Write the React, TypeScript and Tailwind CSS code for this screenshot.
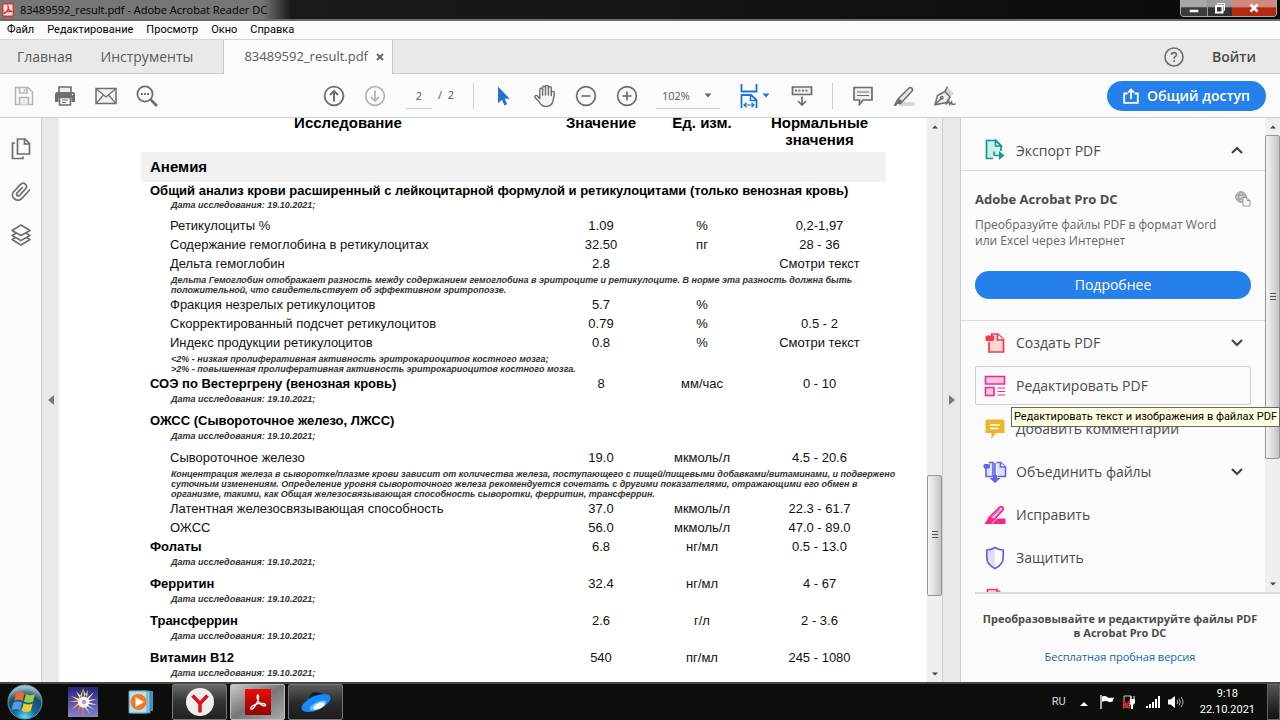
import React from "react";

type IconProps = { className?: string };

/* ---------- toolbar icons ---------- */

const SaveIcon = () => (
  <svg viewBox="0 0 20 20" className="h-5 w-5" fill="none" stroke="#b5b5b5" strokeWidth="1.6">
    <path d="M1.500 1.500h12.500l4.500 4.500v12.500h-17z" />
    <path d="M5.500 1.500v5.500h7.500V1.500" />
    <path d="M10.500 3v2.500" />
    <path d="M5.500 18.500v-7h9v7" fill="#eee" />
  </svg>
);
const PrintIcon = () => (
  <svg viewBox="0 0 22 20" className="h-5 w-[22px]">
    <path d="M5 6V1h12v5" fill="#eee" stroke="#6e6e6e" strokeWidth="1.6" />
    <path d="M1 7.500 2.500 6h17L21 7.500V16h-3.500v-4.500h-13V16H1z" fill="#6e6e6e" />
    <path d="M5.500 11.500h11v7.500h-11z" fill="#fafafa" stroke="#6e6e6e" strokeWidth="1.6" />
    <path d="M8 14h6M8 16.500h4" stroke="#6e6e6e" />
    <circle cx="18.500" cy="8.500" r=".8" fill="#fff" />
  </svg>
);
const MailIcon = () => (
  <svg viewBox="0 0 22 18" className="h-[18px] w-[22px]" fill="none" stroke="#6e6e6e" strokeWidth="1.5">
    <path d="M1 1.500h20v15H1z" fill="#f2f2f2" />
    <path d="m1.500 2 9.500 8 9.500-8M1.500 16l7-8M20.500 16l-7-8" strokeWidth="1.200" />
  </svg>
);
const FindIcon = () => (
  <svg viewBox="0 0 22 22" className="h-[22px] w-[22px]" fill="none" stroke="#6e6e6e">
    <circle cx="9" cy="9" r="7.600" strokeWidth="1.800" />
    <path d="m14.500 14.500 6.500 6.500" strokeWidth="2.600" />
    <path d="M5 9h1.800M8.100 9h1.800M11.200 9H13" strokeWidth="1.800" />
  </svg>
);
const ArrowCircle = ({ down }: { down?: boolean }) => (
  <svg viewBox="0 0 22 22" className="h-[22px] w-[22px]" fill="none" stroke={down ? "#b5b5b5" : "#6e6e6e"} strokeWidth="1.800">
    <circle cx="11" cy="11" r="9.400" />
    {down ? <path d="M11 5.500v10.500M7 12l4 4 4-4" /> : <path d="M11 16.500V6M7 10l4-4 4 4" strokeWidth="2" />}
  </svg>
);
const PointerIcon = () => (
  <svg viewBox="0 0 14 20" className="h-5 w-3.5">
    <path d="M1 .5v16.800l3.900-3.500 2.600 5.700 2.700-1.200-2.500-5.500h5z" fill="#1d74d0" />
  </svg>
);
const HandIcon = () => (
  <svg viewBox="0 0 22 24" className="h-6 w-[22px]" fill="#f4f4f4" stroke="#6e6e6e" strokeWidth="1.400" strokeLinejoin="round" strokeLinecap="round">
    <path d="M5.800 13V5.500c0-1.900 2.800-1.900 2.800 0V3.600c0-1.900 2.900-1.900 2.900 0v-.8c0-1.900 2.900-1.900 2.900 0v1.400c0-1.900 2.900-1.900 2.900 0V8.500c.6-1.800 3.200-1.300 3 .6-.1 2.500-.6 5-1.200 7.400-.9 3.800-3 6-6.800 6-3.800 0-5.700-1.600-7.200-4.800L1 13.500c-.8-1.900 1.400-2.900 2.600-1.300l2.200 2.600z" />
    <path d="M8.600 5.500V11M11.500 3.800V11M14.400 4V11M17.300 8v3.500" />
  </svg>
);
const ZoomCircle = ({ plus }: { plus?: boolean }) => (
  <svg viewBox="0 0 22 22" className="h-[22px] w-[22px]" fill="none" stroke="#6e6e6e" strokeWidth="1.700">
    <circle cx="11" cy="11" r="9.400" />
    <path d="M6.500 11h9" />
    {plus && <path d="M11 6.500v9" />}
  </svg>
);
const FitIcon = () => (
  <svg viewBox="0 0 18 24" className="h-6 w-[18px] shrink-0" fill="none" stroke="#1d74d0" strokeWidth="1.800">
    <path d="M1.500 0v7.500h15V0" />
    <path d="M1.500 24V11h9.500l5.500 5v8" />
    <path d="M10.500 11v5.500h6" strokeWidth="1.500" />
    <path d="M4 21h10M6.500 18.800 4 21l2.500 2.200M11.500 18.800 14 21l-2.500 2.200" strokeWidth="1.200" />
  </svg>
);
const Caret = ({ className }: IconProps) => (
  <svg viewBox="0 0 8 5" className={className}>
    <path d="M.5.500h7L4 4.500z" fill="currentColor" />
  </svg>
);
const KeyboardIcon = () => (
  <svg viewBox="0 0 22 22" className="h-[22px] w-[22px]" fill="none" stroke="#6e6e6e" strokeWidth="1.700">
    <path d="M1.500 2h19v7.500h-19z" fill="#eee" />
    <path d="M4 5.700h14" strokeDasharray="2 1.500" />
    <path d="M11 11.500V20M7 16l4 4 4-4" />
  </svg>
);
const CommentIcon = () => (
  <svg viewBox="0 0 20 20" className="h-5 w-5" fill="#eee" stroke="#6e6e6e" strokeWidth="1.700">
    <path d="M1 1.500h18v12.500h-9l-3.500 4.500V14H1z" />
    <path d="M4 6h12M4 9.500h12" strokeWidth="1.200" />
  </svg>
);
const MarkerIcon = () => (
  <svg viewBox="0 0 22 20" className="h-5 w-[22px]">
    <path d="M9 16h12.500v4H5z" fill="#d6d6d6" />
    <path d="m5.500 12.500 10-10c2-2.200 5.300.3 3.400 2.800l-9 9.700-3.400.3z" fill="#e6e6e6" stroke="#6e6e6e" strokeWidth="1.500" />
    <path d="M5 12 10 16 7.500 18.500l-3-.5L3 20H.5l2.500-5z" fill="#6e6e6e" />
  </svg>
);
const PenIcon = () => (
  <svg viewBox="0 0 22 20" className="h-5 w-[22px]" fill="none" stroke="#6e6e6e" strokeWidth="1.500">
    <path d="M13 1 20 7.500l-4 3-5-5z" fill="#d4d4d4" stroke="none" />
    <path d="M1 18.800 3.500 9.500l7.500-4 5 5.500-3.500 5.500z" fill="#eee" />
    <path d="m1.200 18.500 6-6M11 5.500 13.500.500" />
    <circle cx="7.800" cy="11.800" r="1.200" />
    <path d="m11.500 18.500 3.500-3 .5 3 2-2.500.5 2.500 3.500-.5" />
  </svg>
);
const ShareIcon = () => (
  <svg viewBox="0 0 16 16" className="h-4 w-4" fill="none" stroke="#fff" strokeWidth="1.800">
    <path d="M4.500 5.500H1.200v9.300h13.600V5.500h-3.300" />
    <path d="M8 11V2M5 4.500 8 1.500l3 3" />
  </svg>
);
const HelpIcon = () => (
  <svg viewBox="0 0 20 20" className="h-5 w-5" fill="none" stroke="#6e6e6e" strokeWidth="1.600">
    <circle cx="10" cy="10" r="9" />
    <path d="M7.500 8c0-3.300 5-3 5-.3 0 1.800-2.400 1.800-2.400 4M10.100 13v2" />
  </svg>
);

/* ---------- navigation rail ---------- */

const PagesIcon = () => (
  <svg viewBox="0 0 20 22" className="h-[22px] w-5" fill="none" stroke="#6e6e6e" strokeWidth="1.700">
    <path d="M6.500 1h7.500l4.500 4.500V16h-12z" />
    <path d="M13.500 1v5h5M4 5H1.500v15.500H12V18.500" />
  </svg>
);
const ClipIcon = () => (
  <svg viewBox="0 0 20 20" className="h-5 w-5" fill="none" stroke="#6e6e6e" strokeWidth="1.700" strokeLinecap="round">
    <path d="m18.500 8-7.300 8.200c-4.700 5-12.500-.8-8.700-6.200l6.800-7.400c3.400-3.400 8 .3 5.300 4.200l-6 6.600c-1.800 1.500-3.900-.4-2.600-2.300l5.200-5.600" />
  </svg>
);
const LayersIcon = () => (
  <svg viewBox="0 0 20 22" className="h-[22px] w-5" fill="#fafafa" stroke="#6e6e6e" strokeWidth="1.500" strokeLinejoin="round">
    <path d="m10 10.500 9 5-9 5.500-9-5.500z" />
    <path d="m10 6.500 9 5-9 5-9-5z" />
    <path d="m10 1 9 5.500-9 5-9-5z" />
  </svg>
);

/* ---------- tool panel icons ---------- */

const ExportIcon = () => (
  <svg viewBox="0 0 20 22" className="h-[22px] w-5" fill="none" stroke="#0f9b92" strokeWidth="1.700">
    <path d="M8 19.500H1.500v-18h9.500l5 5V12" fill="#cfeeea" />
    <path d="M10.500 1.500V7H16z" fill="#fff" />
    <path d="M9 12.500v2.500q0 1.500 1.500 1.500H15" />
    <path d="m14 12 5.500 4.500L14 21z" fill="#0f9b92" stroke="none" />
  </svg>
);
const CreateIcon = () => (
  <svg viewBox="0 0 20 20" className="h-5 w-5" fill="none" stroke="#f8384a" strokeWidth="1.700">
    <path d="M4 9v10h14.500V6.500L13 1H6" fill="#fcd6d4" />
    <path d="M12.500 1v6h6" fill="#fff" />
    <rect x=".5" y="2.500" width="8.500" height="5.500" rx="1.500" fill="#f8384a" stroke="none" />
    <path d="M6 0v3.500h3z" fill="#f8384a" stroke="none" />
  </svg>
);
const EditIcon = () => (
  <svg viewBox="0 0 22 22" className="h-[22px] w-[22px]" fill="#fcc6e2" stroke="#f2298a" strokeWidth="1.600">
    <path d="M1.500 1.500h19v7.500h-19zM1.500 12.500h8.500v8H1.500z" />
    <path d="M13.500 13H21M13.500 16.500H21M13.500 20H21" strokeWidth="1.200" />
  </svg>
);
const NoteIcon = () => (
  <svg viewBox="0 0 20 20" className="h-5 w-5">
    <path d="M2 .5h16q1.500 0 1.500 1.500v12H11l-4.500 5.500V14H.5V2Q.5.500 2 .5z" fill="#e8b72b" />
    <path d="M5 6h10M5 9.500h8" stroke="#fff" strokeWidth="1.300" />
  </svg>
);
const CombineIcon = () => (
  <svg viewBox="0 0 24 22" className="h-[22px] w-6" fill="#dfe0fb" stroke="#6163e6" strokeWidth="1.600">
    <path d="M3 7v8.500h7V1.500H6M13.500 1.500h4.500L22.500 6v9.500H14.500" />
    <path d="M17.500 1.500V6h5" fill="#fff" />
    <rect x=".5" y="3" width="6.500" height="4.500" rx="1.500" fill="#6163e6" stroke="none" />
    <path d="M12 2v15" />
    <path d="M10 14h4v3h3.500L12 22l-5.500-5H10z" fill="#6163e6" stroke="none" />
  </svg>
);
const RedactIcon = () => (
  <svg viewBox="0 0 22 20" className="h-5 w-[22px]">
    <path d="M13 13.500h8.500v5.500H8z" fill="#f2298a" />
    <path d="m5.500 12 10-9.500c2.300-2 5 .5 3.200 2.700L9.500 15z" fill="#fcc6e2" stroke="#f2298a" strokeWidth="1.700" />
    <path d="M5 11.500 10 15.500 7.500 19H.5L3 15z" fill="#f2298a" />
    <path d="m7 12.500 8.500-8" stroke="#f2298a" />
  </svg>
);
const ShieldIcon = () => (
  <svg viewBox="0 0 20 24" className="h-6 w-5">
    <path d="M10 2v20C5 19.500 2 16.500 2 11V4.500z" fill="#dedffb" />
    <path d="M10 1.500c2.500 1.700 5 2.500 8.200 2.500v7.500c0 5.500-3.400 8.700-8.200 11-4.800-2.300-8.200-5.500-8.200-11V4C5 4 7.500 3.200 10 1.500z" fill="none" stroke="#6163e6" strokeWidth="1.700" />
  </svg>
);
const CompressIcon = () => (
  <svg viewBox="0 0 20 26" className="h-[26px] w-5" fill="#fcd6d4" stroke="#f8384a" strokeWidth="1.700">
    <path d="M2.500 25V1.500H12l5 4.500v19z" />
    <path d="M5 5h6M12 1.500v5h5" />
  </svg>
);
const GlobeDoc = () => (
  <svg viewBox="0 0 16 16" className="h-4 w-4" fill="none" stroke="#999">
    <circle cx="6" cy="6" r="5.300" fill="#ccc" />
    <path d="M1 4h10M1 8h6M6 .7C2.800 3.500 2.800 8.500 6 11.300M6 .7C9 3.500 9 5 9 6" />
    <path d="M8 6.500h4l3 3v5.500H8z" fill="#fafafa" />
    <path d="M12 6.500v3h3" />
  </svg>
);
const Chevron = ({ up }: { up?: boolean }) => (
  <svg viewBox="0 0 12 8" className="h-2 w-3" fill="none" stroke="#444" strokeWidth="2.200">
    {up ? <path d="m1 7 5-5 5 5" /> : <path d="m1 1 5 5 5-5" />}
  </svg>
);

/* ---------- document ---------- */

type Row =
  | { kind: "title"; name: string; value?: string; unit?: string; norm?: string; tight?: boolean }
  | { kind: "date"; tight?: boolean }
  | { kind: "item"; name: string; value: string; unit: string; norm: string }
  | { kind: "note"; lines: string[] };

const rows: Row[] = [
  { kind: "title", name: "Общий анализ крови расширенный с лейкоцитарной формулой и ретикулоцитами (только венозная кровь)", tight: true },
  { kind: "date", tight: true },
  { kind: "item", name: "Ретикулоциты %", value: "1.09", unit: "%", norm: "0,2-1,97" },
  { kind: "item", name: "Содержание гемоглобина в ретикулоцитах", value: "32.50", unit: "пг", norm: "28 - 36" },
  { kind: "item", name: "Дельта гемоглобин", value: "2.8", unit: "", norm: "Смотри текст" },
  {
    kind: "note",
    lines: [
      "Дельта Гемоглобин отображает разность между содержанием гемоглобина в эритроците и ретикулоците. В норме эта разность должна быть",
      "положительной, что свидетельствует об эффективном эритропоэзе.",
    ],
  },
  { kind: "item", name: "Фракция незрелых ретикулоцитов", value: "5.7", unit: "%", norm: "" },
  { kind: "item", name: "Скорректированный подсчет ретикулоцитов", value: "0.79", unit: "%", norm: "0.5 - 2" },
  { kind: "item", name: "Индекс продукции ретикулоцитов", value: "0.8", unit: "%", norm: "Смотри текст" },
  {
    kind: "note",
    lines: [
      "<2% - низкая пролиферативная активность эритрокариоцитов костного мозга;",
      ">2% - повышенная пролиферативная активность эритрокариоцитов костного мозга.",
    ],
  },
  { kind: "title", name: "СОЭ по Вестергрену (венозная кровь)", value: "8", unit: "мм/час", norm: "0 - 10" },
  { kind: "date" },
  { kind: "title", name: "ОЖСС (Сывороточное железо, ЛЖСС)" },
  { kind: "date" },
  { kind: "item", name: "Сывороточное железо", value: "19.0", unit: "мкмоль/л", norm: "4.5 - 20.6" },
  {
    kind: "note",
    lines: [
      "Концентрация железа в сыворотке/плазме крови зависит от количества железа, поступающего с пищей/пищевыми добавками/витаминами, и подвержено",
      "суточным изменениям. Определение уровня сывороточного железа рекомендуется сочетать с другими показателями, отражающими его обмен в",
      "организме, такими, как Общая железосвязывающая способность сыворотки, ферритин, трансферрин.",
    ],
  },
  { kind: "item", name: "Латентная железосвязывающая способность", value: "37.0", unit: "мкмоль/л", norm: "22.3 - 61.7" },
  { kind: "item", name: "ОЖСС", value: "56.0", unit: "мкмоль/л", norm: "47.0 - 89.0" },
  { kind: "title", name: "Фолаты", value: "6.8", unit: "нг/мл", norm: "0.5 - 13.0" },
  { kind: "date" },
  { kind: "title", name: "Ферритин", value: "32.4", unit: "нг/мл", norm: "4 - 67" },
  { kind: "date" },
  { kind: "title", name: "Трансферрин", value: "2.6", unit: "г/л", norm: "2 - 3.6" },
  { kind: "date" },
  { kind: "title", name: "Витамин B12", value: "540", unit: "пг/мл", norm: "245 - 1080" },
  { kind: "date" },
];

const NOTE = "pl-[30px] text-left text-[9px] font-bold italic whitespace-nowrap text-[#333]";

function ResultRow({ row }: { row: Row }) {
  if (row.kind === "date")
    return (
      <tr className={row.tight ? "h-[17px]" : "h-[18px]"}>
        <td colSpan={4} className="p-0 align-top">
          <div className={`${NOTE} leading-[13px]`}>Дата исследования: 19.10.2021;</div>
        </td>
      </tr>
    );
  if (row.kind === "note")
    return (
      <tr>
        <td colSpan={4} className="p-0 pt-0.5">
          {row.lines.map((l) => (
            <div key={l} className={`${NOTE} leading-[10px]`}>
              {l}
            </div>
          ))}
        </td>
      </tr>
    );
  if (row.kind === "title" && !row.value)
    return (
      <tr className={row.tight ? "h-[17px]" : "h-[19px]"}>
        <th colSpan={4} className="p-0 pl-[9px] text-left font-bold whitespace-nowrap text-black">
          {row.name}
        </th>
      </tr>
    );
  return (
    <tr className="h-[19px]">
      <th className={row.kind === "title" ? "p-0 pl-[9px] text-left font-bold text-black" : "p-0 pl-[29px] text-left font-normal whitespace-nowrap"}>
        {row.name}
      </th>
      <td className="p-0">{row.value}</td>
      <td className="p-0">{row.unit}</td>
      <td className="p-0">{row.norm}</td>
    </tr>
  );
}

function ScrollArrow({ down }: { down?: boolean }) {
  return (
    <span className="flex h-[17px] w-full shrink-0 items-center justify-center">
      <svg viewBox="0 0 8 4" className="h-1 w-1.5">
        <path d={down ? "M0 0h8L4 4z" : "M0 4h8L4 0z"} fill="#444" />
      </svg>
    </span>
  );
}

function Grip() {
  return (
    <svg viewBox="0 0 6 8" className="h-2 w-1.5" stroke="#555">
      <path d="M0 .5h6M0 3.500h6M0 6.500h6" />
    </svg>
  );
}

const THUMB =
  "flex basis-0 w-full items-center justify-center rounded-xs border border-[#979797] bg-linear-to-r from-[#f4f4f4] via-[#dedee0] to-[#c2c2c6]";

/* ---------- chrome ---------- */

function TitleBar() {
  return (
    <header className="flex h-[21px] shrink-0 items-start overflow-hidden border-b-2 border-[#6a6a6a] bg-linear-to-r from-[#1c1c1c] via-[#161616] to-[#0a0a0a]">
      <div className="flex h-[19px] items-center gap-1.5 bg-linear-to-r from-[#777] from-90% to-transparent pr-6 pl-0.5">
        <svg viewBox="0 0 12 14" className="h-3.5 w-3">
          <rect width="12" height="14" rx="1.500" fill="#e0302a" />
          <path d="M1.500 1.500h9v11h-9z" fill="#f6e4e2" />
          <path d="M6 3c1.300 2-.5 5.500-3.300 7.500C1.500 10 4 8 9.500 8.300 10 9.500 6 7.500 6 3z" fill="none" stroke="#e0302a" strokeWidth="1.300" />
        </svg>
        <span className="text-[11px] leading-[19px] text-black">83489592_result.pdf - Adobe Acrobat Reader DC</span>
      </div>
      <div className="mr-[3px] ml-auto flex h-[17px] overflow-hidden rounded-b border border-t-0 border-[#aaa]">
        <button aria-label="Свернуть" className="flex w-[27px] items-center justify-center border-r border-[#999] bg-linear-to-b from-[#a8a8a8] from-40% to-[#3c3c3c] to-50%">
          <svg viewBox="0 0 10 4" className="mt-1.5 h-1 w-2.5">
            <path d="M.5.500h9v3h-9z" fill="#fff" stroke="#444" strokeWidth=".6" />
          </svg>
        </button>
        <button aria-label="Восстановить" className="flex w-6 items-center justify-center bg-linear-to-b from-[#9c9c9c] from-40% to-[#333] to-50%">
          <svg viewBox="0 0 12 12" className="h-3 w-3" fill="none" stroke="#fff">
            <path d="M3.500 2.500V1.500h7v7h-1" />
            <path d="M2 4h6.500v6.500H2z" strokeWidth="2" />
          </svg>
        </button>
        <button aria-label="Закрыть" className="flex w-11 items-center justify-center bg-linear-to-b from-[#d08a7c] from-40% to-[#b32a12] to-50%">
          <svg viewBox="0 0 10 10" className="h-2.5 w-2.5">
            <path d="m1.500 1.500 7 7M8.500 1.500l-7 7" stroke="#fff" strokeWidth="2.600" />
          </svg>
        </button>
      </div>
    </header>
  );
}

function MenuBar() {
  return (
    <nav className="flex h-[19px] shrink-0 items-center gap-[13px] border-b border-[#d4d4d4] bg-[#fbfbfb] px-[7px] font-['Roboto','Noto_Sans',sans-serif] text-[11px] text-black">
      {["Файл", "Редактирование", "Просмотр", "Окно", "Справка"].map((m) => (
        <button key={m}>{m}</button>
      ))}
    </nav>
  );
}

function Tabs() {
  return (
    <div className="flex h-[34px] shrink-0 bg-[#e9e9e9] text-[14px] text-[#5a5a5a]">
      <div className="flex w-[224px] items-center gap-7 border-r border-b border-[#cacaca] pl-[17px]">
        <button>Главная</button>
        <button>Инструменты</button>
      </div>
      <div className="flex w-[169px] items-center justify-end gap-2 border-r border-[#cacaca] bg-[#fbfbfb] pr-2 text-[13px]">
        <span>83489592_result.pdf</span>
        <button aria-label="Закрыть вкладку">
          <svg viewBox="0 0 8 8" className="h-2 w-2" stroke="#666" strokeWidth="2">
            <path d="m1 1 6 6M7 1 1 7" />
          </svg>
        </button>
      </div>
      <div className="flex flex-1 items-center justify-end gap-7 border-b border-[#cacaca] pr-6">
        <button aria-label="Справка">
          <HelpIcon />
        </button>
        <button className="font-semibold text-[#4b4b4b]">Войти</button>
      </div>
    </div>
  );
}

function ToolButton({ label, children }: { label: string; children: React.ReactNode }) {
  return (
    <button aria-label={label} className="flex h-8 w-[41px] shrink-0 items-center justify-center">
      {children}
    </button>
  );
}

function Toolbar() {
  return (
    <div className="flex h-11 shrink-0 items-center justify-between border-b border-[#cfcfcf] bg-[#fbfbfb] pr-3.5 pl-[3px] text-[#555]">
      <div className="flex">
        <ToolButton label="Сохранить"><SaveIcon /></ToolButton>
        <ToolButton label="Печать"><PrintIcon /></ToolButton>
        <ToolButton label="Отправить"><MailIcon /></ToolButton>
        <ToolButton label="Найти"><FindIcon /></ToolButton>
      </div>
      <div className="flex items-center pl-1.5">
        <ToolButton label="Предыдущая страница"><ArrowCircle /></ToolButton>
        <ToolButton label="Следующая страница"><ArrowCircle down /></ToolButton>
        <input aria-label="Страница" defaultValue="2" className="ml-2.5 h-[26px] w-[26px] border-b border-[#ccc] bg-transparent text-center text-[11px]" />
        <span className="ml-1.5 w-[17px] text-[11px] whitespace-pre">/  2</span>
        <span className="ml-[18px] h-[26px] w-px bg-[#cfcfcf]" />
        <div className="ml-2.5 flex">
          <ToolButton label="Выделение"><PointerIcon /></ToolButton>
          <ToolButton label="Рука"><HandIcon /></ToolButton>
          <ToolButton label="Уменьшить"><ZoomCircle /></ToolButton>
          <ToolButton label="Увеличить"><ZoomCircle plus /></ToolButton>
        </div>
        <div className="relative ml-2 w-16">
          <select aria-label="Масштаб" className="h-[26px] w-full appearance-none border-b border-[#ccc] bg-transparent pl-1.5 text-[11px]">
            <option>102%</option>
          </select>
          <Caret className="pointer-events-none absolute top-[11px] right-2 h-[5px] w-2 text-[#666]" />
        </div>
        <button aria-label="По ширине" className="ml-5 flex w-[30px] shrink-0 items-center gap-1">
          <FitIcon />
          <Caret className="h-[5px] w-2 shrink-0 text-[#1d74d0]" />
        </button>
        <div className="ml-3 flex">
          <ToolButton label="Панель"><KeyboardIcon /></ToolButton>
        </div>
        <span className="ml-[9px] h-[26px] w-px bg-[#cfcfcf]" />
        <div className="ml-2.5 flex">
          <ToolButton label="Комментарий"><CommentIcon /></ToolButton>
          <ToolButton label="Выделить текст"><MarkerIcon /></ToolButton>
          <ToolButton label="Подписать"><PenIcon /></ToolButton>
        </div>
      </div>
      <button className="flex h-[30px] items-center gap-2 rounded-full bg-[#2680eb] px-4 text-[14px] font-semibold whitespace-nowrap text-white">
        <ShareIcon />
        Общий доступ
      </button>
    </div>
  );
}

function DocumentPane() {
  return (
    <section className="flex min-w-0 flex-1">
      <button aria-label="Показать панель навигации" className="flex w-[17px] shrink-0 items-center justify-center bg-[#e9e9e9]">
        <svg viewBox="0 0 6 10" className="h-2.5 w-1.5">
          <path d="M6 0v10L0 5z" fill="#777" />
        </svg>
      </button>
      <div className="min-w-0 flex-1 overflow-hidden bg-white pr-[41px] pl-[82px]">
        <table className="-mt-1 w-full table-fixed border-collapse text-center font-['Liberation_Sans',sans-serif] text-[13px] leading-[17px] text-[#111]">
          <colgroup>
            <col />
            <col className="w-[100px]" />
            <col className="w-[102px]" />
            <col className="w-[133px]" />
          </colgroup>
          <thead className="align-top text-[15px] text-black">
            <tr className="h-[38px]">
              <th className="p-0 pl-1">Исследование</th>
              <th className="p-0">Значение</th>
              <th className="p-0">Ед. изм.</th>
              <th className="p-0">Нормальные значения</th>
            </tr>
          </thead>
          <tbody>
            <tr className="h-[30px] bg-[#f1f1f1]">
              <th colSpan={4} className="p-0 pb-0.5 pl-[9px] text-left text-[15px] text-black">
                Анемия
              </th>
            </tr>
            {rows.map((r, i) => (
              <ResultRow key={i} row={r} />
            ))}
          </tbody>
        </table>
      </div>
      <div className="flex w-4 shrink-0 flex-col border-r border-[#cfcfcf] bg-[#efefef]">
        <ScrollArrow />
        <div className="grow-[341] basis-0" />
        <div className={`${THUMB} grow-[120]`}>
          <Grip />
        </div>
        <div className="grow-[69] basis-0" />
        <ScrollArrow down />
      </div>
      <button aria-label="Скрыть панель инструментов" className="flex w-[17px] shrink-0 items-center justify-center bg-[#e9e9e9]">
        <svg viewBox="0 0 6 10" className="h-2.5 w-1.5">
          <path d="M0 0v10l6-5z" fill="#777" />
        </svg>
      </button>
    </section>
  );
}

const tools = [
  { name: "Создать PDF", icon: <CreateIcon />, more: true },
  { name: "Редактировать PDF", icon: <EditIcon />, active: true },
  { name: "Добавить комментарий", icon: <NoteIcon /> },
  { name: "Объединить файлы", icon: <CombineIcon />, more: true },
  { name: "Исправить", icon: <RedactIcon /> },
  { name: "Защитить", icon: <ShieldIcon /> },
  { name: "", icon: <CompressIcon /> },
];

function ToolsPanel() {
  return (
    <aside className="relative flex w-80 shrink-0 flex-col border-l border-[#cfcfcf] bg-[#fbfbfb] text-[#4b4b4b]">
      <div className="flex min-h-0 flex-1">
        <div className="min-w-0 flex-1 overflow-hidden">
          <button className="flex h-[53px] w-full items-center border-b border-[#dcdcdc] pt-3 pr-[22px] pl-[22px] text-[14px]">
            <span className="flex w-6 justify-center"><ExportIcon /></span>
            <span className="flex-1 pl-[9px] text-left">Экспорт PDF</span>
            <Chevron up />
          </button>
          <div className="h-[150px] border-b border-[#dcdcdc] pt-[18px] pr-3.5 pl-3.5">
            <div className="flex items-center justify-between">
              <h2 className="text-[13px] leading-5 font-bold">Adobe Acrobat Pro DC</h2>
              <GlobeDoc />
            </div>
            <p className="mt-2 text-[12px] leading-4 text-[#666]">
              Преобразуйте файлы PDF в формат Word
              <br />
              или Excel через Интернет
            </p>
            <button className="mt-[22px] h-7 w-full rounded-full bg-[#2680eb] text-[14px] leading-7 text-white">Подробнее</button>
          </div>
          <div className="px-3.5">
            {tools.map((t, i) => (
              <div key={i} className="flex h-[43px] items-center">
                <button
                  aria-label={t.name || "Сжать PDF"}
                  className={
                    t.active
                      ? "flex h-[39px] w-full items-center rounded-xs border border-[#cfcfcf] px-[7px] text-[14px]"
                      : "flex h-[39px] w-full items-center border border-transparent px-[7px] text-[14px]"
                  }
                >
                  <span className="flex w-6 justify-center">{t.icon}</span>
                  <span className="flex-1 pl-[9px] text-left">{t.name}</span>
                  {t.more && <Chevron />}
                </button>
              </div>
            ))}
          </div>
        </div>
        <div className="flex w-[15px] shrink-0 flex-col bg-[#efefef]">
          <ScrollArrow />
          <div className={`${THUMB} grow-[324]`}>
            <Grip />
          </div>
          <div className="grow-[117] basis-0" />
          <ScrollArrow down />
        </div>
      </div>
      <footer className="ml-3.5 h-[90px] shrink-0 border-t-2 border-[#dcdcdc] pt-[18px] pr-[15px] text-center">
        <p className="text-[11px] leading-[14px] font-bold whitespace-nowrap">
          Преобразовывайте и редактируйте файлы PDF
          <br />в Acrobat Pro DC
        </p>
        <a href="#trial" className="mt-2 block text-[11px] leading-[18px] text-[#1a5fb4]">
          Бесплатная пробная версия
        </a>
      </footer>
      <div role="tooltip" className="absolute top-[289px] right-0 h-5 border border-[#666] bg-[#ffffe1] px-0.5 font-['Roboto','Noto_Sans',sans-serif] text-[11px] leading-[18px] whitespace-nowrap text-black">
        Редактировать текст и изображения в файлах PDF
      </div>
    </aside>
  );
}

function Taskbar() {
  return (
    <footer className="flex h-[38px] shrink-0 items-center border-t-2 border-[#484848] bg-[#0d0d0b] font-['Roboto','Noto_Sans',sans-serif] text-[11px] text-white">
      <button aria-label="Пуск" className="ml-[7px] shrink-0">
        <svg viewBox="0 0 36 36" className="h-9 w-9">
          <defs>
            <radialGradient id="orb" cx=".5" cy=".95" r=".9">
              <stop offset="0" stopColor="#5be4ff" />
              <stop offset=".35" stopColor="#14699c" />
              <stop offset=".7" stopColor="#1c4a6a" />
              <stop offset="1" stopColor="#a8c4d4" />
            </radialGradient>
          </defs>
          <circle cx="18" cy="18" r="17" fill="url(#orb)" stroke="#6d94a8" />
          <path d="M9 9.500c3-2 6-1.500 8.500 0L15.500 17c-2.500-1.500-5.500-1.800-8.500 0z" fill="#ee6a30" />
          <path d="M19 10c3 1.500 6 1.500 9 0L26 17.800c-3 1.400-6 1.200-9-.3z" fill="#9ccb3c" />
          <path d="M6.500 18.800c3-1.700 6-1.500 8.500 0l-2 7.300c-2.500-1.500-5.500-1.500-8.500.2z" fill="#4f9fe4" />
          <path d="M16.700 19.200c3 1.500 6 1.700 9 .3l-2 7.500c-3 1.300-6 1.200-9-.3z" fill="#fdc92e" />
        </svg>
      </button>
      <button aria-label="Просмотр" className="ml-[25px] shrink-0">
        <svg viewBox="0 0 30 30" className="h-[30px] w-[30px]">
          <defs>
            <linearGradient id="sun" x1="0" y1="0" x2="0" y2="1">
              <stop offset="0" stopColor="#24247e" />
              <stop offset="1" stopColor="#8585c4" />
            </linearGradient>
          </defs>
          <rect width="30" height="30" fill="url(#sun)" />
          <path d="m15 1 1.200 9L20 3l-1 8z" fill="#ffe34d" />
          <path d="m15 1-1.200 9L8 4l4 8-9-3 8 5z" fill="#ffef8a" />
          <path d="m18 12 8-7-6 8 9-1-9 3 9 3-9-1z" fill="#f6f4ff" />
          <path d="m19 17 8 6-9-4 4 8-6-7z" fill="#b9c8ff" />
          <path d="m16 19-1 10-2-10-4 8 2-9z" fill="#ff6b5a" />
          <path d="m12 17-9 6 8-8-10 0 10-2z" fill="#ffb08a" />
          <circle cx="15.500" cy="15" r="5.500" fill="#fff6e8" />
          <circle cx="16" cy="15" r="2.200" fill="#9aa7dd" />
        </svg>
      </button>
      <button aria-label="Проигрыватель" className="ml-[30px] shrink-0">
        <svg viewBox="0 0 26 24" className="h-6 w-[26px]">
          <path d="M5 1h20v20H5z" fill="#3f93bd" />
          <path d="M3 1h19v22H3z" fill="#8cc7e4" stroke="#3f87ad" />
          <path d="M1 1h18v22H1z" fill="#b9dff0" stroke="#5aa5cb" />
          <circle cx="10.500" cy="12" r="8" fill="#f17b1c" />
          <path d="M7.500 7v10l8.500-5z" fill="#fff" />
        </svg>
      </button>
      <div className="ml-[18px] flex shrink-0 gap-[3px]">
        <button aria-label="Яндекс" className="flex h-9 w-[55px] items-center justify-center rounded-xs border border-[#777] bg-linear-to-b from-[#6a6a6a] via-[#333] to-[#222]">
          <svg viewBox="0 0 28 28" className="h-7 w-7">
            <circle cx="14" cy="14" r="14" fill="#eee" />
            <path d="m6.500 7.500 7.500 8 7.500-8M14 15v9.500" fill="none" stroke="#d8161c" strokeWidth="3.600" />
          </svg>
        </button>
        <button aria-label="Acrobat Reader" className="flex h-9 w-[55px] items-center justify-center rounded-xs border border-[#bbb] bg-linear-to-br from-[#ccc] via-[#777] to-[#aaa]">
          <svg viewBox="0 0 26 26" className="h-[26px] w-[26px]">
            <defs>
              <linearGradient id="pdf" x1="0" y1="0" x2="0" y2="1">
                <stop offset="0" stopColor="#f00a0a" />
                <stop offset="1" stopColor="#8b0505" />
              </linearGradient>
            </defs>
            <rect width="26" height="26" fill="url(#pdf)" />
            <path d="M12.500 6c2.500 0 .8 7-3.500 12.500-2 2.500-4 2-3-.2 1.500-2.500 7-4.300 12-3.800 4 .5 3 3 .3 2.200C14.500 15.500 11 10 12.500 6z" fill="none" stroke="#fff" strokeWidth="1.300" />
          </svg>
        </button>
        <button aria-label="Диск" className="flex h-9 w-[55px] items-center justify-center rounded-xs border border-[#777] bg-linear-to-b from-[#5c5c5c] via-[#2c2c2c] to-[#1c1c1c]">
          <svg viewBox="0 0 32 26" className="h-[26px] w-8">
            <path d="M9 9c2-6 6-7 10-5l8 2-16 10z" fill="#0a1c33" />
            <ellipse cx="16" cy="14" rx="15.500" ry="7" transform="rotate(-24 16 14)" fill="#1787fb" />
            <ellipse cx="18" cy="16.500" rx="9" ry="3.600" transform="rotate(-24 18 16.500)" fill="#6fbcff" />
            <ellipse cx="19" cy="17" rx="6" ry="2.600" transform="rotate(-24 19 17)" fill="#fff" />
          </svg>
        </button>
      </div>
      <div className="ml-auto flex h-full items-center">
        <span className="text-[#ddd]">RU</span>
        <svg viewBox="0 0 8 4" className="mt-1 ml-3.5 h-1 w-2">
          <path d="M0 4h8L4 0z" fill="#fff" />
        </svg>
        <svg viewBox="0 0 14 14" className="ml-3 h-3.5 w-3.5">
          <path d="M1 0v14" stroke="#ddd" strokeWidth="1.500" />
          <path d="M2 1.500c2-1 4-.5 5 .5s4 1 7 .5l-1.500 4c-2.500 1-4 .5-5.500-.2S4 6 2 7z" fill="#fff" />
        </svg>
        <svg viewBox="0 0 14 14" className="ml-2 h-3.5 w-3.5">
          <path d="M2 1h7v6l-2 5H2z" fill="none" stroke="#ccc" />
          <path d="M8 4h5v4l-2 2v4H9V10L7 8z" fill="#fff" />
          <path d="M9 1v3M12 1v3" stroke="#fff" />
          <path d="m1 6 7 7.500M8 6l-7 7.500" stroke="#e8141c" strokeWidth="2" />
        </svg>
        <svg viewBox="0 0 14 12" className="ml-2.5 h-3 w-3.5" fill="#fff">
          <path d="M0 10h2v2H0zM3 8h2v4H3zM6 6h2v6H6zM9 3h2v9H9zM12 0h2v12h-2z" />
        </svg>
        <svg viewBox="0 0 16 14" className="ml-2 h-3.5 w-4">
          <path d="M0 4.500h2.500L7 1v12L2.500 9.500H0z" fill="#fff" />
          <path d="M9 5q1.500 2 0 4M11 3.500q2.500 3.500 0 7M13 2q4 5 0 10" fill="none" stroke="#bbb" />
        </svg>
        <div className="ml-4 text-center leading-4">
          <div>9:18</div>
          <div>22.10.2021</div>
        </div>
        <button aria-label="Свернуть все окна" className="ml-3 h-full w-[13px] border border-[#666] bg-linear-to-b from-[#555] to-[#111]" />
      </div>
    </footer>
  );
}

export default function App() {
  return (
    <div className="flex h-screen flex-col overflow-hidden bg-[#fbfbfb] font-['Open_Sans','Noto_Sans',sans-serif]">
      <TitleBar />
      <MenuBar />
      <Tabs />
      <Toolbar />
      <main className="flex min-h-0 flex-1">
        <nav className="flex w-[42px] shrink-0 flex-col items-center gap-[22px] border-r border-[#cfcfcf] bg-[#fbfbfb] pt-5">
          <button aria-label="Миниатюры" className="flex"><PagesIcon /></button>
          <button aria-label="Вложения" className="flex"><ClipIcon /></button>
          <button aria-label="Слои" className="flex"><LayersIcon /></button>
        </nav>
        <DocumentPane />
        <ToolsPanel />
      </main>
      <Taskbar />
    </div>
  );
}
